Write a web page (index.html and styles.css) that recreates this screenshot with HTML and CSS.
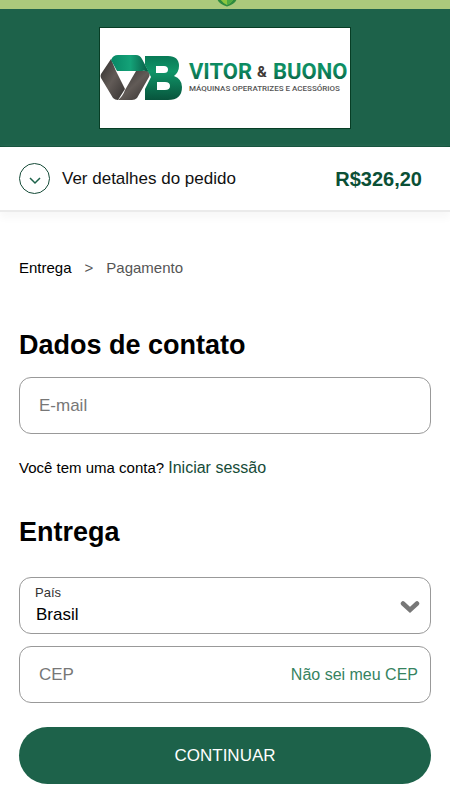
FILE: index.html
```html
<!DOCTYPE html>
<html lang="pt-BR">
<head>
<meta charset="utf-8">
<meta name="viewport" content="width=device-width, initial-scale=1">
<title>Vitor &amp; Buono - Entrega</title>
<link rel="stylesheet" href="styles.css">
</head>
<body>
<div class="security-strip">
  <svg width="20" height="7" viewBox="0 0 20 7" aria-hidden="true">
    <path d="M0 -6H20V-2Q19 4 10 6.500Q1 4 0 -2Z" fill="#2d8b3e"/>
    <path d="M3 -6H17V-2Q16 2 10 5Q4 2 3 -2Z" fill="#8cc63f"/>
    <path d="M10 -6H17V-2Q16 2 10 5Z" fill="#4daa43"/>
  </svg>
</div>
<header class="brand">
  <svg class="logo" width="250" height="100" viewBox="0 0 250 100" role="img" aria-label="Vitor &amp; Buono">
    <defs>
      <linearGradient id="green" x1="0" y1="0" x2="0" y2="1"><stop offset="0" stop-color="#087a56"/><stop offset=".35" stop-color="#109568"/><stop offset="1" stop-color="#08543c"/></linearGradient>
      <linearGradient id="top" x1="0" y1="0" x2="1" y2="0"><stop offset="0" stop-color="#078765"/><stop offset=".5" stop-color="#14a278"/><stop offset="1" stop-color="#075540"/></linearGradient>
      <linearGradient id="gray" x1="0" y1="0" x2="1" y2="1"><stop offset="0" stop-color="#302e2d"/><stop offset=".5" stop-color="#625b57"/><stop offset="1" stop-color="#353130"/></linearGradient>
    </defs>
    <path d="M11 31L1 46Q0 48 1 50L13 70Q15 72 18 72L25 61L16 43Z" fill="url(#gray)"/>
    <path d="M36 43H47Q51 45 49 49L37 70Q35 72 32 72H18Q23 68 25 62Z" fill="url(#gray)"/>
    <path d="M11 32Q13 27 18 27H36Q40 27 42 31L50 46Q47 42 42 43H17Z" fill="url(#top)"/>
    <path d="M45 28H68Q79 28 79 38Q79 44 74 48Q82 51 82 59Q82 72 68 72H45V61L51 49L45 37ZM56 38V45H64Q68 45 68 41.500Q68 38 64 38ZM57 54V62H65Q70 62 70 58Q70 54 65 54Z" fill="url(#green)" fill-rule="evenodd"/>
    <text class="logo-name" x="89" y="51">VITOR</text>
    <text class="logo-and" x="157" y="49">&amp;</text>
    <text class="logo-name" x="173" y="51">BUONO</text>
    <text class="logo-tagline" x="89" y="63">MÁQUINAS OPERATRIZES E ACESSÓRIOS</text>
  </svg>
</header>
<section class="summary">
  <button class="summary-toggle" type="button">
    <svg width="31" height="31" viewBox="0 0 31 31" fill="none" aria-hidden="true">
      <circle cx="15.500" cy="15.500" r="15" stroke="#164b38"/>
      <path d="M11 15L16 20L21 15" stroke="#1d624a" stroke-width="1.500"/>
    </svg>
    <span>Ver detalhes do pedido</span>
  </button>
  <strong class="total">R$326,20</strong>
</section>
<main class="checkout">
  <nav class="steps" aria-label="Etapas">
    <span class="current" aria-current="step">Entrega</span><span>&gt;</span><span>Pagamento</span>
  </nav>
  <form>
    <h2>Dados de contato</h2>
    <input class="control" type="email" placeholder="E-mail" aria-label="E-mail">
    <p class="account">Você tem uma conta? <a href="#login">Iniciar sessão</a></p>
    <h2>Entrega</h2>
    <div class="fields">
      <div class="select-field">
        <label for="country">País</label>
        <select class="control" id="country"><option>Brasil</option></select>
        <svg width="20" height="14" viewBox="0 0 20 14" fill="none" aria-hidden="true"><path d="M3 3.500L10 10L17 3.500" stroke="#777" stroke-width="4.500" stroke-linecap="round"/></svg>
      </div>
      <div class="control zip-field">
        <input type="text" placeholder="CEP" aria-label="CEP">
        <a href="#cep">Não sei meu CEP</a>
      </div>
    </div>
    <button class="submit" type="submit">CONTINUAR</button>
  </form>
</main>
</body>
</html>
```
FILE: styles.css
```css
* {
  box-sizing: border-box;
}

body {
  margin: 0;
  background: #fff;
  color: #000;
  font: 16px/20px "Liberation Sans", Arial, sans-serif;
}

a {
  text-decoration: none;
}

button,
input,
select {
  font: inherit;
}

.security-strip {
  display: flex;
  justify-content: center;
  height: 9px;
  padding-left: 4px;
  background: #abc97c;
}

.brand {
  display: flex;
  justify-content: center;
  padding: 19px 16px 18px;
  background: #1d624a;
  border-bottom: 1px solid #0b4c34;
}

.logo {
  display: block;
  background: #fff;
  outline: 1px solid #073d25;
}

.logo-name {
  fill: url(#green);
  font: bold 22px Roboto, sans-serif;
}

.logo-and {
  fill: #403936;
  font: bold 15px Roboto, sans-serif;
}

.logo-tagline {
  fill: #555;
  font: 500 8px Roboto, sans-serif;
}

.summary {
  display: flex;
  align-items: center;
  justify-content: space-between;
  height: 65px;
  padding: 0 28px 0 19px;
  border-bottom: 2px solid #ebebeb;
  box-shadow: 0 6px 8px #f8f8f8;
}

.summary-toggle {
  display: flex;
  align-items: center;
  gap: 12px;
  padding: 0;
  border: 0;
  background: none;
  color: #111;
  font-size: 17px;
}

.total {
  color: #0b5036;
  font-size: 20px;
}

.checkout {
  padding: 46px 19px 16px;
}

.steps {
  display: flex;
  gap: 13px;
  margin-bottom: 51px;
  color: #555;
  font-size: 15px;
}

.steps .current {
  color: #000;
}

h2 {
  margin: 0;
  font-size: 27px;
  line-height: 32px;
}

.control {
  display: block;
  width: 100%;
  height: 57px;
  padding: 0 19px;
  border: 1px solid #999;
  border-radius: 12px;
  background: #fff;
  font-size: 17px;
}

h2 + .control {
  margin-top: 16px;
}

input::placeholder {
  color: #777;
  opacity: 1;
}

.account {
  margin: 24px 0 38px;
  font-size: 15px;
}

.account a {
  color: #164b38;
  font-size: 16px;
}

.fields {
  display: grid;
  gap: 12px;
  margin: 29px 0 24px;
}

.select-field {
  position: relative;
}

.select-field label {
  position: absolute;
  top: 6px;
  left: 16px;
  color: #333;
  font-size: 13px;
}

.select-field select {
  padding: 18px 40px 0 16px;
  color: #000;
  appearance: none;
}

.select-field svg {
  position: absolute;
  top: 23px;
  right: 11px;
  pointer-events: none;
}

.zip-field {
  display: flex;
  align-items: center;
  gap: 12px;
  padding-right: 12px;
}

.zip-field input {
  flex: 1;
  min-width: 0;
  padding: 0;
  border: 0;
  outline: 0;
}

.zip-field a {
  color: #36835f;
  font-size: 16px;
}

.submit {
  display: block;
  width: 100%;
  height: 57px;
  border: 0;
  border-radius: 29px;
  background: #1d624a;
  color: #fff;
  font-size: 17px;
}
```
